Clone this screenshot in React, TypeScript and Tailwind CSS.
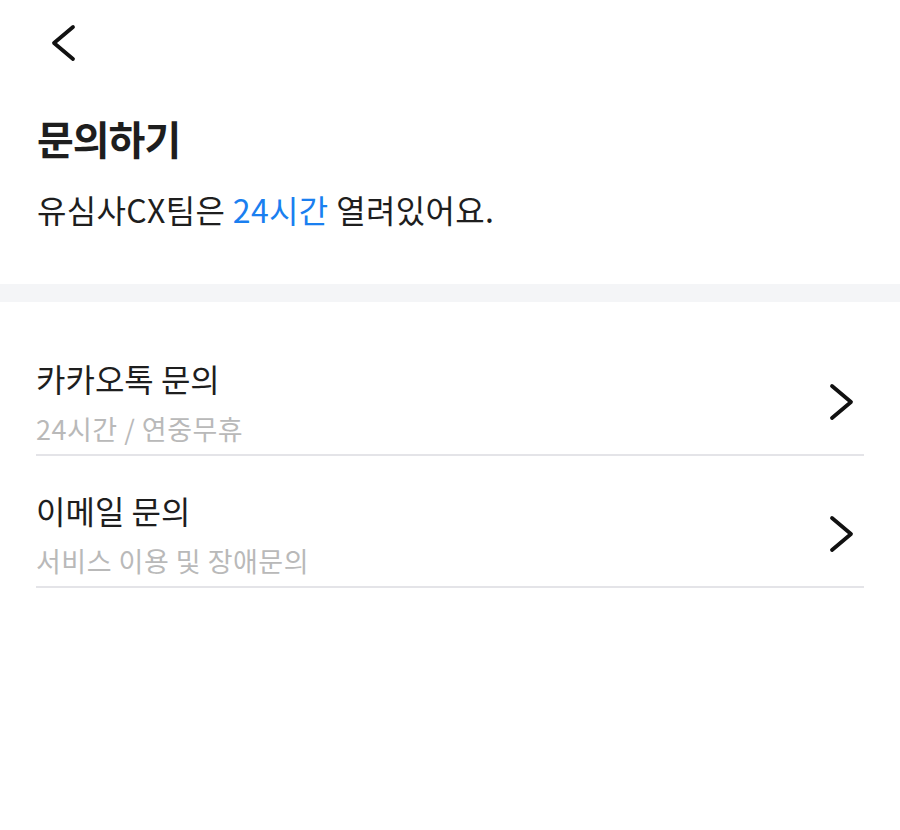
const items = [
  { title: '카카오톡 문의', desc: '24시간 / 연중무휴' },
  { title: '이메일 문의', desc: '서비스 이용 및 장애문의' },
]

function Chevron({ dir, className }: { dir: 'left' | 'right'; className?: string }) {
  const points = dir === 'left' ? '23,3 4,19 23,35' : '3,3 22,19 3,35'
  return (
    <svg viewBox="0 0 26 38" width={26} height={38} className={className} fill="none">
      <polyline points={points} stroke="#111" strokeWidth={3.8} strokeLinecap="round" strokeLinejoin="round" />
    </svg>
  )
}

export default function App() {
  return (
    <div
      className="min-h-screen w-[900px] bg-white text-[#1e1e1e]"
      style={{ fontFamily: '"Noto Sans CJK KR", "Noto Sans", sans-serif' }}
    >
      {/* top bar */}
      <div className="h-[84px] pl-[50px] pt-[24px]">
        <Chevron dir="left" />
      </div>

      {/* heading */}
      <div className="px-[37px] pt-[34px]">
        <h1 className="text-[40px] font-bold leading-none tracking-[-1px]">문의하기</h1>
        <p className="mt-[35px] text-[32px] leading-none tracking-[0.35px]">
          유심사CX팀은 <span className="text-[#1a7ff0]">24시간</span> 열려있어요.
        </p>
      </div>

      <div className="mt-[59px] h-[18px] bg-[#f4f5f7]" />

      {/* list */}
      <div className="px-[36px] pt-[22px]">
        {items.map((item, index) => (
          <div key={index} className="pt-[38px]">
            <div className="flex items-center justify-between border-b-2 border-[#e4e4e8] pb-[12px]">
              <div>
                <div className="text-[32px] leading-none">{item.title}</div>
                <div className="mt-[21px] text-[27px] leading-none tracking-[0.5px] text-[#b9b9b9]">{item.desc}</div>
              </div>
              <Chevron dir="right" className="mr-[9px]" />
            </div>
          </div>
        ))}
      </div>
    </div>
  )
}
